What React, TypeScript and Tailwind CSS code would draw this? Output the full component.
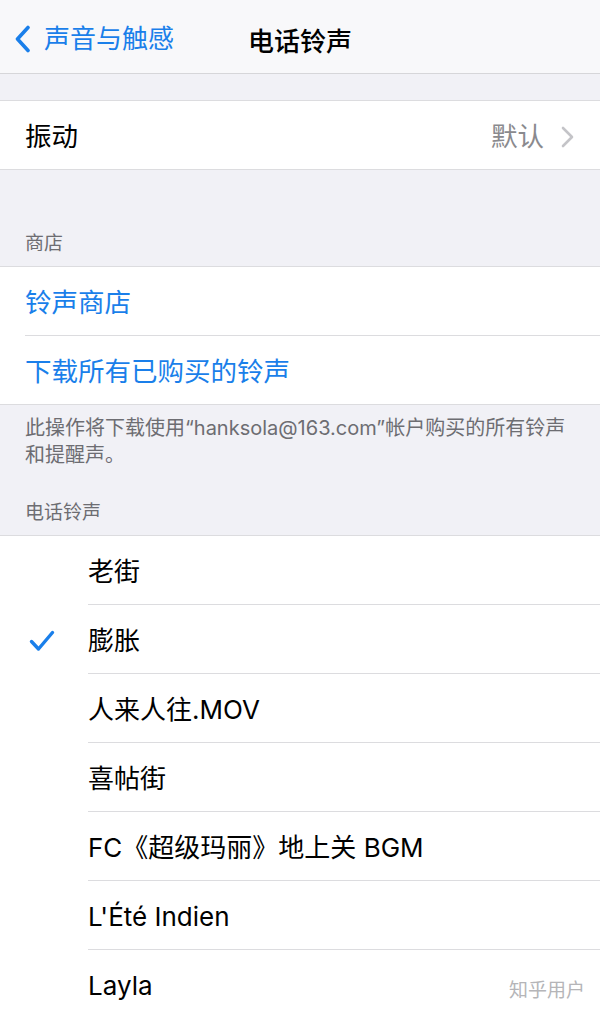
import React from "react";

const font = { fontFamily: '"Inter", "Noto Sans CJK SC", sans-serif' };

function Chevron() {
  return (
    <svg width="13" height="22" viewBox="0 0 13 22" fill="none">
      <path d="M2 2 L11 11 L2 20" stroke="#c4c4c8" strokeWidth="2.6" strokeLinecap="round" strokeLinejoin="round" />
    </svg>
  );
}

function Check() {
  return (
    <svg width="26" height="22" viewBox="0 0 26 22" fill="none">
      <path d="M2.5 11.5 L9.5 19 L23.5 2.5" stroke="#1a7fea" strokeWidth="3.4" strokeLinecap="round" strokeLinejoin="round" />
    </svg>
  );
}

const tones = ["老街", "膨胀", "人来人往.MOV", "喜帖街", "FC《超级玛丽》地上关 BGM", "L'Été Indien", "Layla"];

export default function App() {
  return (
    <div className="relative w-[600px] h-[1011px] overflow-hidden bg-[#f1f1f6]" style={font}>
      {/* Nav bar */}
      <div className="relative h-[74px] bg-[#f8f8fa] border-b border-[#d6d6d9] flex items-center pt-[5px]">
        <div className="flex items-center pl-[14px] text-[#1a7fea]">
          <svg width="18" height="28" viewBox="0 0 18 28" fill="none">
            <path d="M14 2.5 L3.5 14 L14 25.5" stroke="#1a7fea" strokeWidth="3.6" strokeLinecap="round" strokeLinejoin="round" />
          </svg>
          <span className="ml-[12px] text-[26px] leading-none">声音与触感</span>
        </div>
        <div className="absolute left-0 right-0 top-[5px] h-[73px] flex items-center justify-center pointer-events-none">
          <span className="text-[26px] font-medium text-black leading-none">电话铃声</span>
        </div>
      </div>

      <div className="h-[26px]" />

      {/* Vibration */}
      <div className="bg-white border-y border-[#dcdcdf]">
        <div className="h-[68px] flex items-center pl-[25px] pr-[26px] pt-[3px]">
          <span className="text-[26.5px] text-black">振动</span>
          <div className="ml-auto flex items-center gap-[17px]">
            <span className="text-[26.5px] text-[#8a8a8e]">默认</span>
            <Chevron />
          </div>
        </div>
      </div>

      {/* Store header */}
      <div className="h-[96px] flex items-end pl-[25px] pb-[8px]">
        <span className="text-[19px] text-[#6d6d72]">商店</span>
      </div>

      <div className="bg-white border-y border-[#dcdcdf]">
        <div className="h-[68px] flex items-center pl-[25px] pt-[3px]">
          <span className="text-[26.5px] text-[#1a7fea]">铃声商店</span>
        </div>
        <div className="ml-[25px] h-px bg-[#dcdcdf]" />
        <div className="h-[68px] flex items-center pl-[25px] pt-[3px]">
          <span className="text-[26.5px] text-[#1a7fea]">下载所有已购买的铃声</span>
        </div>
      </div>

      {/* Footer */}
      <div className="pl-[25px] pr-[10px] pt-[10px] text-[20px] leading-[27px] text-[#6d6d72] whitespace-nowrap">
        此操作将下载使用“hanksola@163.com”帐户购买的所有铃声
        <br />
        和提醒声。
      </div>

      <div className="h-[66px] flex items-end pl-[25px] pb-[8px]">
        <span className="text-[19px] text-[#6d6d72]">电话铃声</span>
      </div>

      <div className="bg-white border-t border-[#dcdcdf]">
        {tones.map((t, i) => (
          <div key={t}>
            {i > 0 && <div className="ml-[88px] h-px bg-[#dcdcdf]" />}
            <div className="h-[68px] flex items-center pt-[3px]">
              <div className="w-[88px] flex items-center pl-[29px]">{t === "膨胀" && <Check />}</div>
              <span className="text-[26px] text-black">{t}</span>
            </div>
          </div>
        ))}
      </div>

      <div className="absolute right-[15px] bottom-[11px] text-[19px] text-[#b5b5b8] leading-none">知乎用户</div>
    </div>
  );
}
